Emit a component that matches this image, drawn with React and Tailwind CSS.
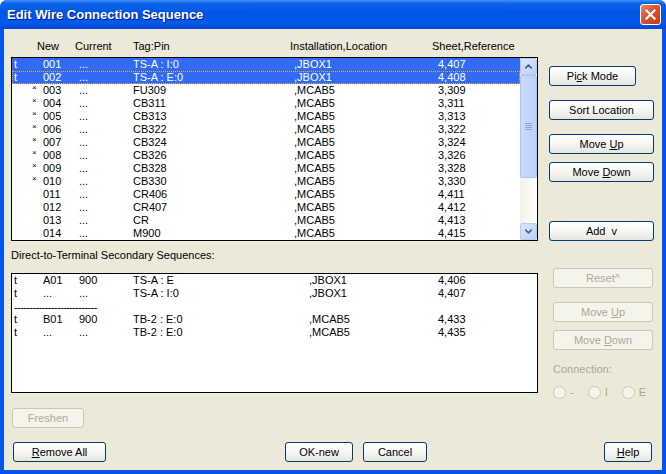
import { ChevronUp, ChevronDown } from "lucide-react";

const mainRows = [
  { t: "t", m: false, n: "001", c: "...", tag: "TS-A : I:0", inst: ",JBOX1", sh: "4,407", sel: true },
  { t: "t", m: false, n: "002", c: "...", tag: "TS-A : E:0", inst: ",JBOX1", sh: "4,408", sel: true, focus: true },
  { t: "", m: true, n: "003", c: "...", tag: "FU309", inst: ",MCAB5", sh: "3,309" },
  { t: "", m: true, n: "004", c: "...", tag: "CB311", inst: ",MCAB5", sh: "3,311" },
  { t: "", m: true, n: "005", c: "...", tag: "CB313", inst: ",MCAB5", sh: "3,313" },
  { t: "", m: true, n: "006", c: "...", tag: "CB322", inst: ",MCAB5", sh: "3,322" },
  { t: "", m: true, n: "007", c: "...", tag: "CB324", inst: ",MCAB5", sh: "3,324" },
  { t: "", m: true, n: "008", c: "...", tag: "CB326", inst: ",MCAB5", sh: "3,326" },
  { t: "", m: true, n: "009", c: "...", tag: "CB328", inst: ",MCAB5", sh: "3,328" },
  { t: "", m: true, n: "010", c: "...", tag: "CB330", inst: ",MCAB5", sh: "3,330" },
  { t: "", m: false, n: "011", c: "...", tag: "CR406", inst: ",MCAB5", sh: "4,411" },
  { t: "", m: false, n: "012", c: "...", tag: "CR407", inst: ",MCAB5", sh: "4,412" },
  { t: "", m: false, n: "013", c: "...", tag: "CR", inst: ",MCAB5", sh: "4,413" },
  { t: "", m: false, n: "014", c: "...", tag: "M900", inst: ",MCAB5", sh: "4,415" },
];

const secRows = [
  { t: "t", n: "A01", c: "900", tag: "TS-A : E", inst: ",JBOX1", sh: "4,406" },
  { t: "t", n: "...", c: "...", tag: "TS-A : I:0", inst: ",JBOX1", sh: "4,407" },
  { dash: true },
  { t: "t", n: "B01", c: "900", tag: "TB-2 : E:0", inst: ",MCAB5", sh: "4,433" },
  { t: "t", n: "...", c: "...", tag: "TB-2 : E:0", inst: ",MCAB5", sh: "4,435" },
];

function Btn({ children, className = "", disabled = false }) {
  return (
    <button
      className={
        "h-[20px] shrink-0 rounded-[3px] border text-[11px] font-normal leading-none flex items-center justify-center " +
        (disabled
          ? "border-[#c9c7ba] bg-[#f5f4ea] text-[#aca899] "
          : "border-[#003c74] bg-[linear-gradient(180deg,#ffffff_0%,#f5f5f1_55%,#e6e4dc_100%)] text-black ") +
        className
      }
    >
      <span>{children}</span>
    </button>
  );
}

function Radio({ label }) {
  return (
    <div className="flex items-center">
      <span className="w-[13px] h-[13px] rounded-full border border-[#cac8bb] bg-[#f5f4ea]" />
      <span className="ml-[4px] text-[11px] text-[#aca899]">{label}</span>
    </div>
  );
}

function Scrollbar() {
  return (
    <div className="w-[17px] shrink-0 h-full flex flex-col bg-[linear-gradient(90deg,#f3f1ea,#fefefb)]">
      <div className="h-[17px] rounded-[2px] border border-[#b8cbf3] bg-[linear-gradient(135deg,#dbe6fd,#bccffa)] flex items-center justify-center">
        <ChevronUp size={11} strokeWidth={3.5} className="text-[#4d6185]" />
      </div>
      <div className="h-[103px] rounded-[2px] border border-[#b0c4f4] bg-[linear-gradient(90deg,#cbdafc,#bdd0fa)] flex flex-col items-center justify-center gap-[1px]">
        <span className="w-[7px] h-px bg-[#8aa4e0]" />
        <span className="w-[7px] h-px bg-[#8aa4e0]" />
        <span className="w-[7px] h-px bg-[#8aa4e0]" />
        <span className="w-[7px] h-px bg-[#8aa4e0]" />
      </div>
      <div className="flex-1" />
      <div className="h-[17px] rounded-[2px] border border-[#b8cbf3] bg-[linear-gradient(135deg,#dbe6fd,#bccffa)] flex items-center justify-center">
        <ChevronDown size={11} strokeWidth={3.5} className="text-[#4d6185]" />
      </div>
    </div>
  );
}

export default function App() {
  return (
    <div
      className="w-[666px] h-[474px] flex flex-col bg-[#0055ea] rounded-t-[7px] overflow-hidden text-black"
      style={{ fontFamily: '"Liberation Sans", Arial, sans-serif' }}
    >
      {/* title bar */}
      <div className="h-[29px] shrink-0 flex items-center pl-[7px] pr-[5px] bg-[linear-gradient(180deg,#3d8ff8_0%,#0d62ea_12%,#0055e5_45%,#0059ec_80%,#0648d2_100%)]">
        <span className="text-[13px] font-bold text-white [text-shadow:1px_1px_#0a1883]">
          Edit Wire Connection Sequence
        </span>
        <div className="ml-auto w-[21px] h-[21px] rounded-[3px] border border-white bg-[linear-gradient(135deg,#eb8a6c,#d8532f_45%,#c03a16)] flex items-center justify-center">
          <svg width="11" height="11" viewBox="0 0 11 11">
            <path d="M1.5 1.5 L9.5 9.5 M9.5 1.5 L1.5 9.5" stroke="white" strokeWidth="2.2" strokeLinecap="square" />
          </svg>
        </div>
      </div>

      {/* dialog body */}
      <div className="flex-1 mx-[4px] mb-[4px] bg-[#ece9d8] pl-[7px] pr-[10px] pt-[11px] flex flex-col text-[11px] leading-[13px]">
        <div className="flex">
          {/* left column */}
          <div className="w-[527px] shrink-0 flex flex-col">
            <div className="flex h-[13px] pl-[26px]">
              <span className="w-[38px]">New</span>
              <span className="w-[58px]">Current</span>
              <span className="w-[157px]">Tag:Pin</span>
              <span className="w-[142px]">Installation,Location</span>
              <span>Sheet,Reference</span>
            </div>

            <div className="mt-[4px] h-[184px] border border-black bg-white flex">
              <div className="flex-1 flex flex-col">
                {mainRows.map((r) => (
                  <div
                    key={r.n}
                    className={
                      "h-[13px] flex items-center pl-[2px] " +
                      (r.sel ? "bg-[#316af5] text-white " : "") +
                      (r.focus ? "outline-1 outline-dotted outline-[#f0a640] -outline-offset-1" : "")
                    }
                  >
                    <span className="w-[18px]">{r.t}</span>
                    <span className="w-[11px] self-start text-[8px] leading-[7px]">{r.m ? "×" : ""}</span>
                    <span className="w-[36px]">{r.n}</span>
                    <span className="w-[54px]">{r.c}</span>
                    <span className="w-[161px]">{r.tag}</span>
                    <span className="w-[144px]">{r.inst}</span>
                    <span>{r.sh}</span>
                  </div>
                ))}
              </div>
              <Scrollbar />
            </div>

            <div className="mt-[8px] h-[13px]">Direct-to-Terminal Secondary Sequences:</div>

            <div className="mt-[11px] h-[120px] border border-black bg-white flex flex-col">
              {secRows.map((r, i) =>
                r.dash ? (
                  <div key={i} className="h-[13px] pl-[2px] overflow-hidden tracking-[-0.6px] leading-[15px]">
                    ---------------------------
                  </div>
                ) : (
                  <div key={i} className="h-[13px] flex items-center pl-[2px]">
                    <span className="w-[29px]">{r.t}</span>
                    <span className="w-[36px]">{r.n}</span>
                    <span className="w-[54px]">{r.c}</span>
                    <span className="w-[176px]">{r.tag}</span>
                    <span className="w-[129px]">{r.inst}</span>
                    <span>{r.sh}</span>
                  </div>
                )
              )}
            </div>

            <Btn disabled className="mt-[15px] ml-[1px] w-[72px]">Freshen</Btn>
          </div>

          {/* right column */}
          <div className="ml-[11px] w-[105px] shrink-0 flex flex-col">
            <Btn className="mt-[26px] w-[87px]">
              Pi<u>c</u>k Mode
            </Btn>
            <Btn className="mt-[14px] w-[105px]">Sort Location</Btn>
            <Btn className="mt-[14px] w-[105px]">
              Move <u>U</u>p
            </Btn>
            <Btn className="mt-[8px] w-[105px]">
              Move <u>D</u>own
            </Btn>
            <Btn className="mt-[39px] w-[105px]">Add&nbsp; v</Btn>

            <Btn disabled className="mt-[27px] ml-[4px] w-[100px]">Reset^</Btn>
            <Btn disabled className="mt-[14px] ml-[4px] w-[100px]">
              Move <u>U</u>p
            </Btn>
            <Btn disabled className="mt-[8px] ml-[4px] w-[100px]">
              Move <u>D</u>own
            </Btn>
            <div className="mt-[13px] ml-[4px] h-[13px] text-[#aca899]">Connection:</div>
            <div className="mt-[10px] ml-[4px] flex gap-[14px]">
              <Radio label="-" />
              <Radio label="I" />
              <Radio label="E" />
            </div>
          </div>
        </div>

        {/* bottom buttons */}
        <div className="mt-[14px] flex">
          <Btn className="ml-[2px] w-[93px]">
            <u>R</u>emove All
          </Btn>
          <Btn className="ml-[179px] w-[68px]">OK-new</Btn>
          <Btn className="ml-[10px] w-[64px]">Cancel</Btn>
          <Btn className="ml-auto w-[48px]">
            <u>H</u>elp
          </Btn>
        </div>
      </div>
    </div>
  );
}
